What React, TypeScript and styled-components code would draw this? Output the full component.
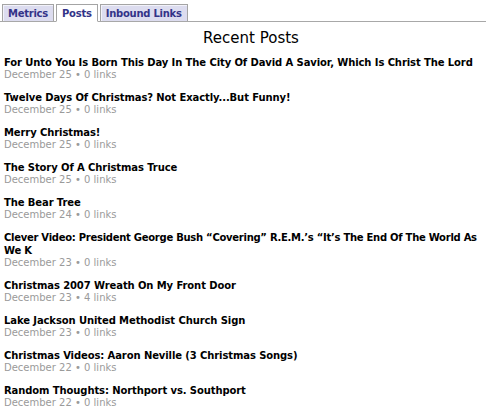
import React from "react";
import styled, { createGlobalStyle } from "styled-components";

const Global = createGlobalStyle`
  html, body { margin: 0; padding: 0; background: #ffffff; }
  body { font-family: "DejaVu Sans", Verdana, sans-serif; }
`;

const Page = styled.div`
  width: 486px;
  height: 414px;
  overflow: hidden;
  background: #fff;
`;

const TabBar = styled.div`
  display: flex;
  align-items: flex-end;
  gap: 2px;
  padding: 4px 0 0 2px;
  border-bottom: 1px solid #a8a8a8;
  height: 17px;
`;

const Tab = styled.div<{ $active?: boolean }>`
  height: ${(p) => (p.$active ? "18px" : "17px")};
  box-sizing: border-box;
  padding: 0 5px;
  display: flex;
  align-items: center;
  font-family: "DejaVu Sans", Verdana, sans-serif;
  font-weight: bold;
  font-size: 10px;
  letter-spacing: -0.25px;
  color: #333388;
  background: ${(p) => (p.$active ? "#ffffff" : "#dcdcef")};
  border: 1px solid #a4a4a4;
  border-bottom: ${(p) => (p.$active ? "1px solid #ffffff" : "none")};
  box-shadow: ${(p) => (p.$active ? "none" : "inset 1px 1px 0 #f2f2fa")};
  margin-bottom: ${(p) => (p.$active ? "-1px" : "0")};
`;

const Heading = styled.h1`
  margin: 6px 0 8px;
  padding-left: 16px;
  text-align: center;
  font-family: "DejaVu Sans", Verdana, sans-serif;
  font-weight: normal;
  font-size: 15px;
  color: #000;
  line-height: 20px;
`;

const List = styled.div`
  display: flex;
  flex-direction: column;
  gap: 10px;
  padding: 0 4px;
`;

const Item = styled.div`
  display: flex;
  flex-direction: column;
`;

const Title = styled.div<{ $tight?: boolean }>`
  font-family: "DejaVu Sans", Verdana, sans-serif;
  font-weight: bold;
  font-size: 10px;
  letter-spacing: ${(p) => (p.$tight ? "-0.27px" : "-0.1px")};
  line-height: 13px;
  color: #000;
  white-space: pre;
`;

const Meta = styled.div`
  font-family: "DejaVu Sans", Verdana, sans-serif;
  font-size: 10px;
  line-height: 12px;
  color: #9a9a9a;
`;

const posts: [string, string, string][] = [
  ["For Unto You Is Born This Day In The City Of David A Savior, Which Is Christ The Lord", "December 25", "0 links"],
  ["Twelve Days Of Christmas? Not Exactly...But Funny!", "December 25", "0 links"],
  ["Merry Christmas!", "December 25", "0 links"],
  ["The Story Of A Christmas Truce", "December 25", "0 links"],
  ["The Bear Tree", "December 24", "0 links"],
  ["Clever Video: President George Bush \u201cCovering\u201d R.E.M.\u2019s \u201cIt\u2019s The End Of The World As\nWe K", "December 23", "0 links"],
  ["Christmas 2007 Wreath On My Front Door", "December 23", "4 links"],
  ["Lake Jackson United Methodist Church Sign", "December 23", "0 links"],
  ["Christmas Videos: Aaron Neville (3 Christmas Songs)", "December 22", "0 links"],
  ["Random Thoughts: Northport vs. Southport", "December 22", "0 links"],
];

export default function App() {
  return (
    <Page>
      <Global />
      <TabBar>
        <Tab>Metrics</Tab>
        <Tab $active>Posts</Tab>
        <Tab>Inbound Links</Tab>
      </TabBar>
      <Heading>Recent Posts</Heading>
      <List>
        {posts.map(([t, d, l]) => (
          <Item key={t}>
            <Title $tight={t.includes("\n")}>{t}</Title>
            <Meta>{d} {"\u2022"} {l}</Meta>
          </Item>
        ))}
      </List>
    </Page>
  );
}
